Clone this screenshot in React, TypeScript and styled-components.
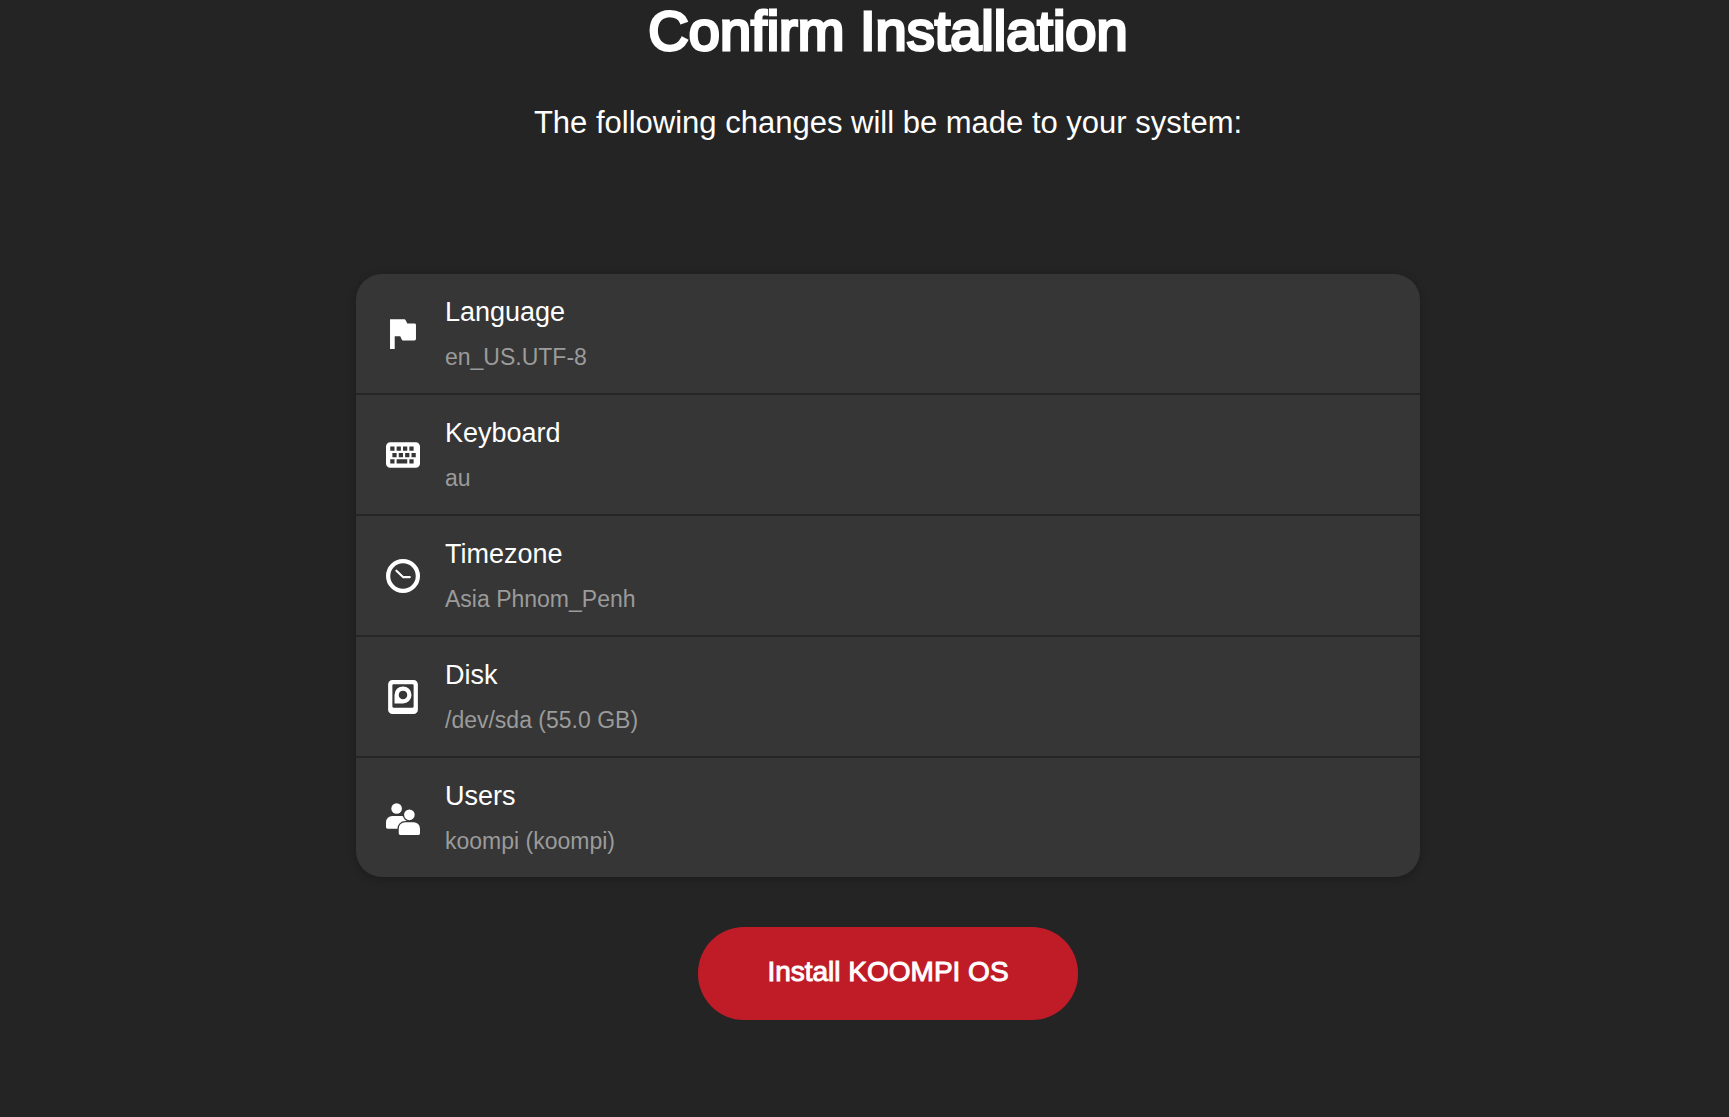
import type { ReactNode } from "react";
import styled, { createGlobalStyle } from "styled-components";

const GlobalStyle = createGlobalStyle`
  *, *::before, *::after { box-sizing: border-box; }
  body {
    margin: 0;
    background: #242424;
    color: #ffffff;
    font-family: "Liberation Sans", Arial, Helvetica, sans-serif;
  }
`;

const Page = styled.main`
  min-height: 100vh;
  padding: 0 0 0 47px;
  display: flex;
  flex-direction: column;
  align-items: center;
`;

const Title = styled.h1`
  margin: 0;
  font-size: 56px;
  line-height: 62px;
  font-weight: 400;
  -webkit-text-stroke: 3px currentColor;
`;

const Subtitle = styled.p`
  margin: 43px 0 133px;
  font-size: 31px;
  line-height: 36px;
`;

const Summary = styled.ul`
  width: 100%;
  max-width: 1064px;
  margin: 0 0 50px;
  padding: 0;
  list-style: none;
  border-radius: 26px;
  background: #363636;
  box-shadow: 0 2px 8px rgba(0, 0, 0, 0.24);
`;

const Row = styled.li`
  display: flex;
  align-items: center;
  gap: 25px;
  padding: 22px 30px;

  & + & {
    border-top: 2px solid #262626;
  }
`;

const RowText = styled.div`
  display: flex;
  flex-direction: column;
  gap: 15px;
`;

const Label = styled.span`
  font-size: 27px;
  line-height: 32px;
`;

const Value = styled.span`
  font-size: 23px;
  line-height: 28px;
  color: #9b9b9b;
`;

const Icon = styled.svg`
  flex: none;
  width: 34px;
  height: 34px;
  fill: #ffffff;
`;

const InstallButton = styled.button`
  padding: 28px 69px 31px;
  border: 0;
  border-radius: 46px;
  background: #c01c28;
  color: #ffffff;
  font-family: inherit;
  font-size: 28px;
  line-height: 34px;
  -webkit-text-stroke: 1px currentColor;
  cursor: pointer;
`;

const flag = (
  <path d="M2 1H8.5C9 1 9.2 1.3 9.4 1.8L10 3H13.4A.7.7 0 0 1 14.1 3.7V10.4A.7.7 0 0 1 13.4 11.1H8.2C7.7 11.1 7.5 10.9 7.3 10.4L6.7 9.1H4.1V15H1.9V1Z" />
);

const keyboard = (
  <path
    fillRule="evenodd"
    d="M2 2H14A2 2 0 0 1 16 4V12A2 2 0 0 1 14 14H2A2 2 0 0 1 0 12V4A2 2 0 0 1 2 2ZM2 4V6H4V4ZM5 4V6H7V4ZM8 4V6H10V4ZM11 4V6H13V4ZM3 7V9H5V7ZM6 7V9H8V7ZM9 7V9H11V7ZM12 7V9H14V7ZM2 10V12H4V10ZM5 10V12H10V10ZM11 10V12H13V10Z"
  />
);

const clock = (
  <g fill="none" stroke="#ffffff">
    <circle cx="8" cy="8" r="7" strokeWidth="2" />
    <path d="M4.9 5.5L8 8.5H11.2" strokeWidth="1" strokeLinecap="round" strokeLinejoin="round" />
  </g>
);

const disk = (
  <>
    <path
      fillRule="evenodd"
      d="M3 0H13A2 2 0 0 1 15 2V14A2 2 0 0 1 13 16H3A2 2 0 0 1 1 14V2A2 2 0 0 1 3 0ZM3.5 2A.5.5 0 0 0 3 2.5V12.5A.5.5 0 0 0 3.5 13H12.5A.5.5 0 0 0 13 12.5V2.5A.5.5 0 0 0 12.5 2Z"
    />
    <path
      fillRule="evenodd"
      d="M8 3A4 4 0 0 1 8 11H4V7A4 4 0 0 1 8 3ZM8 5A2 2 0 0 0 8 9A2 2 0 0 0 8 5Z"
    />
  </>
);

const users = (
  <>
    <circle cx="5" cy="3.5" r="2.5" />
    <path d="M3 7H7.5A3 3 0 0 1 10 10V13H.7A.7.7 0 0 1 0 12.3V10A3 3 0 0 1 3 7Z" />
    <g stroke="#363636" strokeWidth="1.2" paintOrder="stroke">
      <circle cx="11" cy="6.5" r="2.5" />
      <path d="M9 10H13A3 3 0 0 1 16 13V15.3A.7.7 0 0 1 15.3 16H6.7A.7.7 0 0 1 6 15.3V13A3 3 0 0 1 9 10Z" />
    </g>
  </>
);

interface Setting {
  label: string;
  value: string;
  icon: ReactNode;
}

const settings: Setting[] = [
  { label: "Language", value: "en_US.UTF-8", icon: flag },
  { label: "Keyboard", value: "au", icon: keyboard },
  { label: "Timezone", value: "Asia Phnom_Penh", icon: clock },
  { label: "Disk", value: "/dev/sda (55.0 GB)", icon: disk },
  { label: "Users", value: "koompi (koompi)", icon: users },
];

export default function App() {
  return (
    <>
      <GlobalStyle />
      <Page>
        <Title>Confirm Installation</Title>
        <Subtitle>The following changes will be made to your system:</Subtitle>
        <Summary>
          {settings.map(({ label, value, icon }) => (
            <Row key={label}>
              <Icon viewBox="0 0 16 16" aria-hidden="true">
                {icon}
              </Icon>
              <RowText>
                <Label>{label}</Label>
                <Value>{value}</Value>
              </RowText>
            </Row>
          ))}
        </Summary>
        <InstallButton type="button">Install KOOMPI OS</InstallButton>
      </Page>
    </>
  );
}
